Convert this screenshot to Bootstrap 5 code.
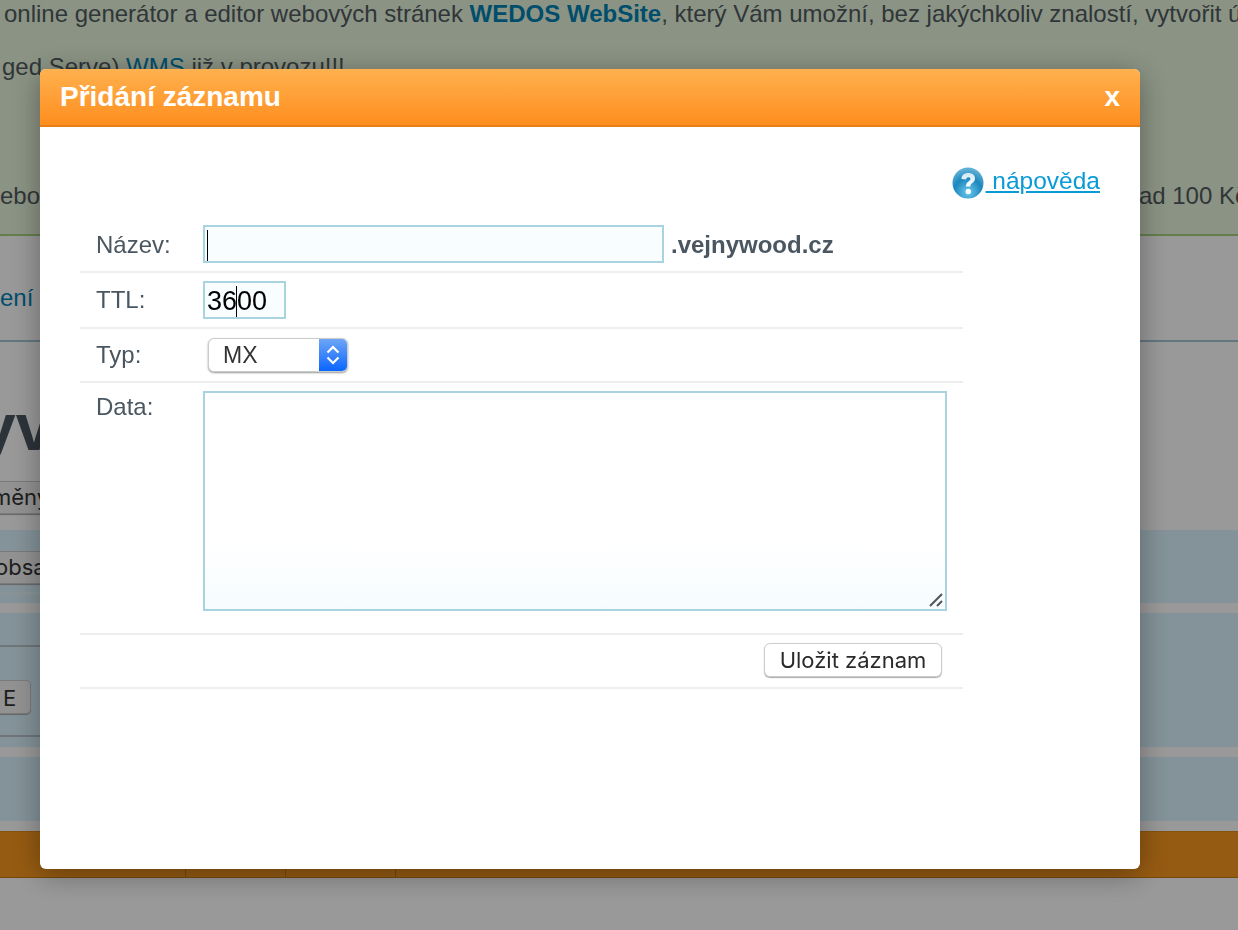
<!DOCTYPE html>
<html lang="cs"><head><meta charset="utf-8"><title>Přidání záznamu</title>
<link href="https://cdn.jsdelivr.net/npm/bootstrap@5.3.0/dist/css/bootstrap.min.css" rel="stylesheet">
<style>
html,body{height:930px;overflow:hidden;background:#fff}
body{font-family:"Liberation Sans",Arial,sans-serif;color:#4a5660;font-size:24px;line-height:1.2}
a{color:#0a9bd6}
.page-wrap{width:1260px;position:relative}
.promo{height:236px;background:#e8f6dc;border-bottom:2px solid #a6d27e;color:#505a60;white-space:nowrap}
.promo a{color:#0082b5;text-decoration:none}
.promo p{margin:0}
.promo-1{padding:0 0 0 4px}
.promo-2{padding:24px 0 0 2px}
.promo-3{padding:100px 13px 0 0}
.crumbs{height:106px;border-bottom:2px solid #a3c6d6;padding-top:48px;color:#0082b5;white-space:nowrap}
.big-title{font-size:66px;font-weight:700;color:#4a5660;line-height:1;padding-top:52px;height:139px;white-space:nowrap;text-indent:-21px;overflow:hidden}
.fake-btn{background:#f4f4f4;border:1px solid #ccc;border-left:0;border-radius:0 5px 5px 0;color:#333;font-family:"Inter",sans-serif;font-size:22px;line-height:28px;height:33px;padding:1px 14px 2px 0;display:block;box-shadow:0 1px 1px #aaa;white-space:nowrap}
.btn-wide{width:200px;text-indent:-5px}
.btn-many{text-indent:-8px}
.sect-a{height:49px}
.band{background:#dcf5ff}
.band-1{height:73px;padding-top:21px}
.band-strip{height:3px;margin-top:8px;background:#e6f7fe;width:200px}
.band-2{height:134px;margin-top:10px}
.band-3{height:64px;margin-top:10px}
.line-a{height:34px;border-bottom:2px solid #b9c4c9;width:200px}
.line-b{height:90px;border-bottom:2px solid #b9c4c9;width:200px;padding-top:33px}
.btn-e{width:31px;padding:2px 0 2px 3px;height:34px;line-height:30px}
.bottom-bar{height:47px;margin-top:10px;background:#fa981e;border-top:1px solid #e08a1a;border-bottom:1px solid #c97a12}
.bottom-bar span{height:100%;border-right:1px solid #c87a14}
.bb-1{width:186px}.bb-2{width:100px}.bb-3{width:110px}
.dim{position:fixed;inset:0;background:rgba(0,0,0,.4);z-index:10}
.dlg{position:fixed;left:40px;top:69px;width:1100px;height:800px;background:#fff;border-radius:6px;z-index:20;box-shadow:0 5px 30px rgba(0,0,0,.35);overflow:hidden}
.dlg-head{height:58px;background:linear-gradient(#ffb14f,#ff8e1e);border-bottom:2px solid #e87f14;color:#fff;font-weight:700;font-size:28px;padding:0 20px}
.dlg-body{padding:40px 40px 0}
.help{height:32px;margin-bottom:26px;font-size:24.500px}
.help a{text-decoration:underline;white-space:pre;margin-top:-4px}
.help svg{width:32px;height:32px;flex:none;margin-right:2px}
.rows{width:883px}
.frow{display:flex;border-bottom:2px solid #eee;padding-left:16px}
.frow label{width:107px;flex:none;font-size:24px;color:#4a5660}
.r1{height:48px;align-items:flex-start}.r2{height:56px;padding-top:8px}.r3{height:54px;padding-top:9px}.r4{height:252px;padding-top:8px}.r5{height:54px;justify-content:flex-end;padding-right:21px;padding-top:8px}
.r1 label{padding-top:6px}
.r2 label{padding-top:5px}
.r3 label{padding-top:3px}
.r4 label{padding-top:2px}
.fld{border:2px solid #a9d3de;background:linear-gradient(#fff 70%,#f5fcff);border-radius:0;outline:0;display:block;padding:0 2px}
.fld-name{width:461px;height:38px;position:relative;background:#f8fdff}
.caret-mark{position:absolute;width:1px;background:#000}
.caret-1{left:2px;top:3px;height:31px}
.fld-ttl{width:83px;height:38px;font-size:27px;color:#000;line-height:36px;position:relative;background:#f8fdff}
.caret-2{left:31px;top:3px;height:31px}
.domain{font-weight:700;font-size:24px;margin-left:7px;padding-top:6px}
.mac-sel{margin-left:5px;width:140px;height:34px;border-radius:6px;border:1px solid #ccc;box-shadow:0 1px 2px #999;background:#fff;font-size:23px;color:#333;padding:3px 0 0 14px;position:relative;overflow:hidden}
.mac-arrow{position:absolute;right:0;top:0;bottom:0;width:28px;background:linear-gradient(#6ea5f7,#0a66ff)}
.data-wrap{position:relative;width:744px;height:220px}
.fld-data{width:744px;height:220px;resize:none;font-size:18px}
.grip{position:absolute;right:3px;bottom:4px}
.save{background:#fff;border:1px solid #ccc;border-radius:6px;box-shadow:0 1px 1px #aaa;font-family:"Inter",sans-serif;font-size:22px;color:#2a2a2a;height:34px;width:178px;padding:0}
</style></head><body>
<div class="page-wrap">
  <div class="promo">
    <p class="promo-1">online generátor a editor webových stránek <a href="#"><b>WEDOS WebSite</b></a>, který Vám umožní, bez jakýchkoliv znalostí, vytvořit úžasné</p>
    <p class="promo-2">ged Serve) <a href="#">WMS</a> již v provozu!!!</p>
    <p class="promo-3 d-flex justify-content-between"><span>ebo</span><span>nad 100 Kč</span></p>
  </div>
  <div class="crumbs">ení d</div>
  <div class="big-title">yv</div>
  <div class="sect-a"><span class="fake-btn btn-wide btn-many">měny</span></div>
  <div class="band band-1"><span class="fake-btn btn-wide">obsah</span><div class="band-strip"></div></div>
  <div class="band band-2">
    <div class="line-a"></div>
    <div class="line-b"><span class="fake-btn btn-e">E</span></div>
  </div>
  <div class="band band-3"></div>
  <div class="bottom-bar d-flex"><span class="bb-1"></span><span class="bb-2"></span><span class="bb-3"></span></div>
</div>
<div class="dim"></div>
<div class="dlg">
  <div class="dlg-head d-flex align-items-center justify-content-between"><span>Přidání záznamu</span><span>x</span></div>
  <div class="dlg-body">
    <div class="help d-flex justify-content-end align-items-center">
      <svg viewBox="0 0 32 32"><defs><radialGradient id="g" cx=".5" cy=".8" r=".75"><stop offset="0" stop-color="#6cc8ee"/><stop offset=".6" stop-color="#1d87bd"/><stop offset="1" stop-color="#5fb0d6"/></radialGradient><linearGradient id="q" x1="0" y1="0" x2="0" y2="1"><stop offset="0" stop-color="#cfe8f4"/><stop offset="1" stop-color="#fff"/></linearGradient></defs><circle cx="16" cy="16" r="15.500" fill="url(#g)"/><path d="M9.500 12c0-4 3-6 6.800-6 4 0 6.700 2.200 6.700 5.500 0 4.300-4.700 4.300-4.700 8h-4.300c0-5.200 4.400-5.300 4.400-7.600 0-1-.8-1.700-2-1.700-1.300 0-2.200.8-2.300 2.300z" fill="url(#q)"/><circle cx="16.300" cy="24.500" r="2.700" fill="#fff"/></svg>
      <a href="#"> nápověda</a>
    </div>
    <div class="rows">
      <div class="frow r1"><label>Název:</label><div class="fld fld-name"><i class="caret-mark caret-1"></i></div><span class="domain">.vejnywood.cz</span></div>
      <div class="frow r2"><label>TTL:</label><div class="fld fld-ttl">3600<i class="caret-mark caret-2"></i></div></div>
      <div class="frow r3"><label>Typ:</label><div class="mac-sel">MX<span class="mac-arrow d-flex align-items-center justify-content-center"><svg width="16" height="26" viewBox="0 0 16 26" fill="none" stroke="#fff" stroke-width="2.200"><path d="M2.500 10.500L8 5l5.500 5.500M2.500 15.500L8 21l5.500-5.500"/></svg></span></div></div>
      <div class="frow r4"><label>Data:</label><div class="data-wrap"><textarea class="fld fld-data" aria-label="Data"></textarea><svg class="grip" width="15" height="14" viewBox="0 0 15 14" stroke="#555" stroke-width="2"><path d="M1 13L13 1M8 13l5-5"/></svg></div></div>
      <div class="frow r5"><button class="save" type="button">Uložit záznam</button></div>
    </div>
  </div>
</div>
<script src="https://cdn.jsdelivr.net/npm/bootstrap@5.3.0/dist/js/bootstrap.bundle.min.js"></script>
</body></html>
